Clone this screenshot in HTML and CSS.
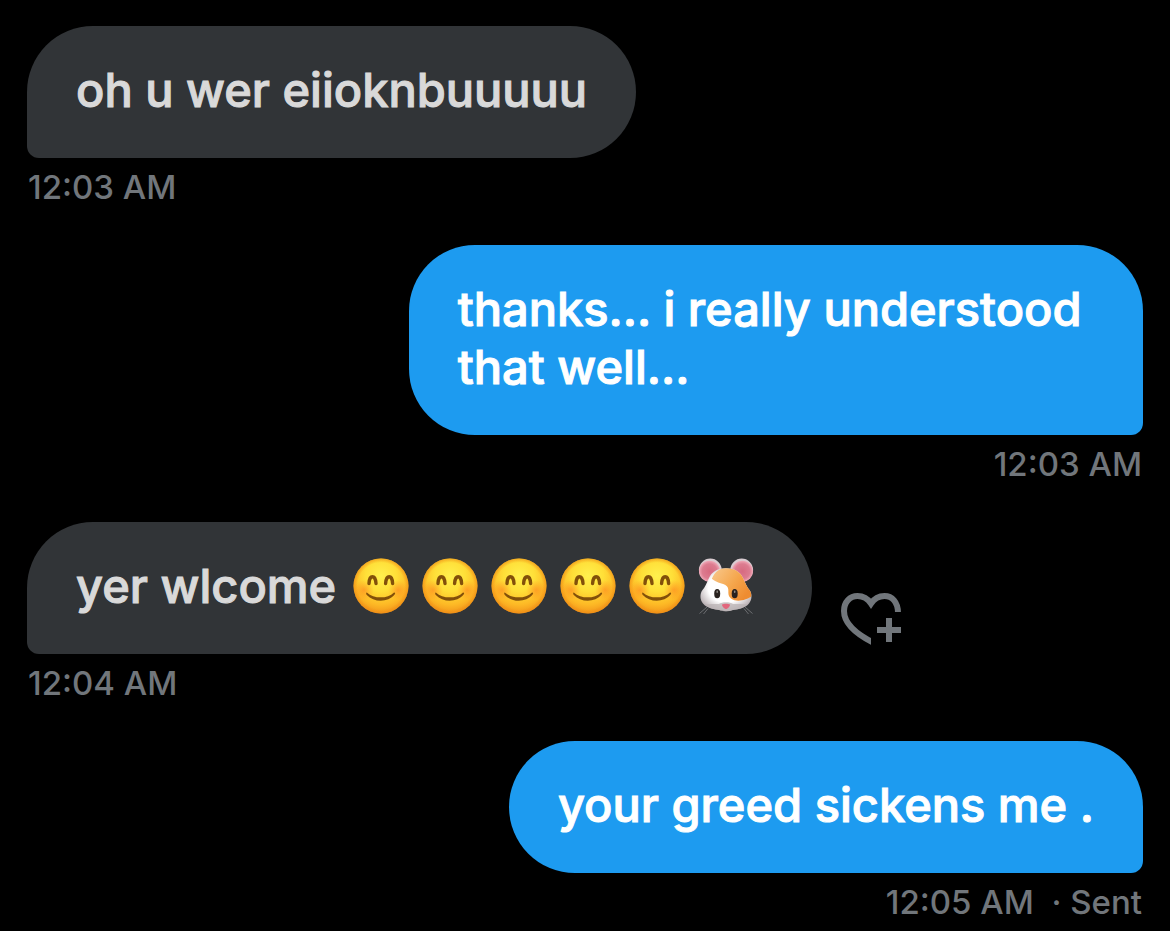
FILE: index.html
```html
<!DOCTYPE html>
<html lang="en">
<head>
    <meta charset="UTF-8">
    <meta name="viewport" content="width=device-width, initial-scale=1.0">
    <title>Messages</title>
    <link rel="stylesheet" href="styles.css">
</head>
<body>
    <!-- shared emoji shapes -->
    <svg class="defs" width="0" height="0" aria-hidden="true">
        <defs>
            <radialGradient id="faceFill" cx="0.5" cy="0.32" r="0.7">
                <stop offset="0" stop-color="#fff04e"/>
                <stop offset="0.4" stop-color="#ffdf38"/>
                <stop offset="0.75" stop-color="#fdb825"/>
                <stop offset="1" stop-color="#f0911a"/>
            </radialGradient>
            <radialGradient id="faceEdge">
                <stop offset="0.85" stop-color="#ee8a12" stop-opacity="0"/>
                <stop offset="1" stop-color="#ee8a12" stop-opacity="0.6"/>
            </radialGradient>
            <radialGradient id="blush">
                <stop offset="0" stop-color="#ff6a1a" stop-opacity="0.45"/>
                <stop offset="1" stop-color="#ff7a1a" stop-opacity="0"/>
            </radialGradient>
            <radialGradient id="earFill">
                <stop offset="0" stop-color="#d76a80"/>
                <stop offset="0.7" stop-color="#dc7c90"/>
                <stop offset="1" stop-color="#f0a9b8"/>
            </radialGradient>
            <radialGradient id="furFill" cx="0.5" cy="0.45" r="0.58">
                <stop offset="0.6" stop-color="#ffffff"/>
                <stop offset="1" stop-color="#b9b0b3"/>
            </radialGradient>
            <linearGradient id="patchFill" x1="0" y1="0" x2="1" y2="0.6">
                <stop offset="0" stop-color="#f8c98d"/>
                <stop offset="0.6" stop-color="#f5a64c"/>
                <stop offset="1" stop-color="#ee8c31"/>
            </linearGradient>
        </defs>
        <symbol id="smile" viewBox="0 0 56 56">
            <circle cx="28" cy="28" r="27.5" fill="url(#faceFill)"/>
            <circle cx="28" cy="28" r="27.5" fill="url(#faceEdge)"/>
            <circle cx="11" cy="32" r="10" fill="url(#blush)"/>
            <circle cx="45" cy="32" r="10" fill="url(#blush)"/>
            <path d="M16 25.5C16.4 16.5 22.4 16.5 23 25.5M32.6 25.5C33.2 16.5 39.2 16.5 39.6 25.5" fill="none" stroke="#82500a" stroke-width="3.4" stroke-linecap="round"/>
            <path d="M13.8 34.4C21 41 34.5 41 41 34.4C42.2 34.2 42.5 35.4 41.6 36.6C35 44.8 21 44.8 13.8 37C12.9 35.8 13 34.4 13.8 34.4Z" fill="#82500a"/>
        </symbol>
        <symbol id="hamster" viewBox="0 0 56 56">
            <circle cx="12.3" cy="12" r="11.4" fill="#d9ccd1"/>
            <circle cx="43.7" cy="12" r="11.4" fill="#d9ccd1"/>
            <circle cx="11.6" cy="13.3" r="10.6" fill="url(#earFill)"/>
            <circle cx="44.4" cy="13.3" r="10.6" fill="url(#earFill)"/>
            <path d="M9 49L1.5 55.5M10 50.5L5.5 56M47 49L54.5 55.5M46 50.5L50.5 56" stroke="#85868a" stroke-width="0.7"/>
            <path d="M28 10.3C19 10.3 13.5 14.5 11 20C8.5 25.5 7 29 4.5 32C1.5 36 2 42 5 45.5C9 50.5 17 51.5 21 52C25 53.6 31 53.6 35 52C39 51.5 47 50.5 51 45.5C54 42 54.5 36 51.5 32C49 29 47.5 25.5 45 20C42.5 14.5 37 10.3 28 10.3Z" fill="url(#furFill)"/>
            <path d="M13.8 20.8C17 13.5 21.5 10.3 28 10.3C37 10.3 42.5 14.5 45 20C47.5 25.5 49 29 51.5 32C53 34 53.4 36 53.2 38.5C49 41.6 39 45 33 40.5C27.5 36 33.5 30.5 27 26.8C22 24.5 18.5 24.8 13.8 20.8Z" fill="url(#patchFill)"/>
            <path d="M21 46C24 43.5 32 43.5 35 46C39 46 45 45.5 49.5 46.5C45 51 38 51.5 34.5 52C31 53.8 25 53.8 21.5 52C17 51.5 11 50.5 6.5 46.5C11 45.5 17 46 21 46Z" fill="#b8b0b2" opacity="0.7"/>
            <ellipse cx="19.2" cy="35.7" rx="3" ry="4.6" fill="#29221f"/>
            <ellipse cx="36.7" cy="35.7" rx="3" ry="4.6" fill="#29221f"/>
            <ellipse cx="19.2" cy="33.8" rx="0.8" ry="1.2" fill="#8d8984"/>
            <ellipse cx="36.7" cy="33.8" rx="0.8" ry="1.2" fill="#8d8984"/>
            <path d="M24 46.5C26 45.5 30 45.5 32 46.5C32 49 29 51 28 51C27 51 24 49 24 46.5Z" fill="#e2677d"/>
        </symbol>
    </svg>

    <main class="chat">
        <div class="message received">
            <p class="bubble">oh u wer eiioknbuuuuu</p>
            <div class="meta">12:03 AM</div>
        </div>

        <div class="message sent">
            <p class="bubble">thanks... i really understood&nbsp;<br>that well...</p>
            <div class="meta">12:03 AM</div>
        </div>

        <div class="message received">
            <div class="row">
                <p class="bubble">yer wlcome <svg class="emoji" role="img" aria-label="smiling face"><use href="#smile"/></svg><svg class="emoji" role="img" aria-label="smiling face"><use href="#smile"/></svg><svg class="emoji" role="img" aria-label="smiling face"><use href="#smile"/></svg><svg class="emoji" role="img" aria-label="smiling face"><use href="#smile"/></svg><svg class="emoji" role="img" aria-label="smiling face"><use href="#smile"/></svg><svg class="emoji" role="img" aria-label="hamster"><use href="#hamster"/></svg></p>
                <button class="react" type="button" aria-label="Add reaction">
                    <svg width="60" height="52" viewBox="0 0 60 52">
                        <clipPath id="heartCut"><path d="M0 0H60V19H30V52H0Z"/></clipPath>
                        <path clip-path="url(#heartCut)" d="M57 20C57 9 51 3 43.5 3C37.5 3 33 6 30 10.5C27 6 22.5 3 16.5 3C9 3 3 9 3 18C3 30 15 41 33 50" fill="none" stroke="#71767b" stroke-width="6"/>
                        <path d="M45 25H51V34H60V40H51V49H45V40H36V34H45Z" fill="#71767b"/>
                    </svg>
                </button>
            </div>
            <div class="meta">12:04 AM</div>
        </div>

        <div class="message sent">
            <p class="bubble">your greed sickens me .</p>
            <div class="meta">12:05 AM &nbsp;· Sent</div>
        </div>
    </main>
</body>
</html>
```
FILE: styles.css
```css
* {
    box-sizing: border-box;
}
body {
    margin: 0;
    background: #000;
    font-family: Inter, "Liberation Sans", sans-serif;
    font-weight: 500;
}
.defs {
    display: block;
}
.chat {
    display: flex;
    flex-direction: column;
    gap: 38px;
    padding: 26px 27px 10px;
}
.message {
    display: flex;
    flex-direction: column;
    align-items: flex-start;
}
.message.sent {
    align-items: flex-end;
}
.row {
    display: flex;
    align-items: flex-end;
    gap: 29px;
}
.bubble {
    margin: 0;
    padding: 35px 49px 39px;
    border-radius: 66px 66px 66px 12px;
    background: #313437;
    color: #d9d9d9;
    font-size: 47px;
    line-height: 58px;
    -webkit-text-stroke: 1px currentColor;
}
.sent .bubble {
    border-radius: 66px 66px 12px 66px;
    background: #1d9bf0;
    color: #fff;
}
.meta {
    margin-top: 9px;
    padding: 0 1px;
    color: #71767b;
    font-size: 33px;
    line-height: 40px;
}
.emoji {
    width: 56px;
    height: 56px;
    margin: 0 9px 0 4px;
    vertical-align: -11px;
}
.react {
    padding: 0 0 9px;
    border: none;
    background: none;
    cursor: pointer;
}
.react svg {
    display: block;
}
```
